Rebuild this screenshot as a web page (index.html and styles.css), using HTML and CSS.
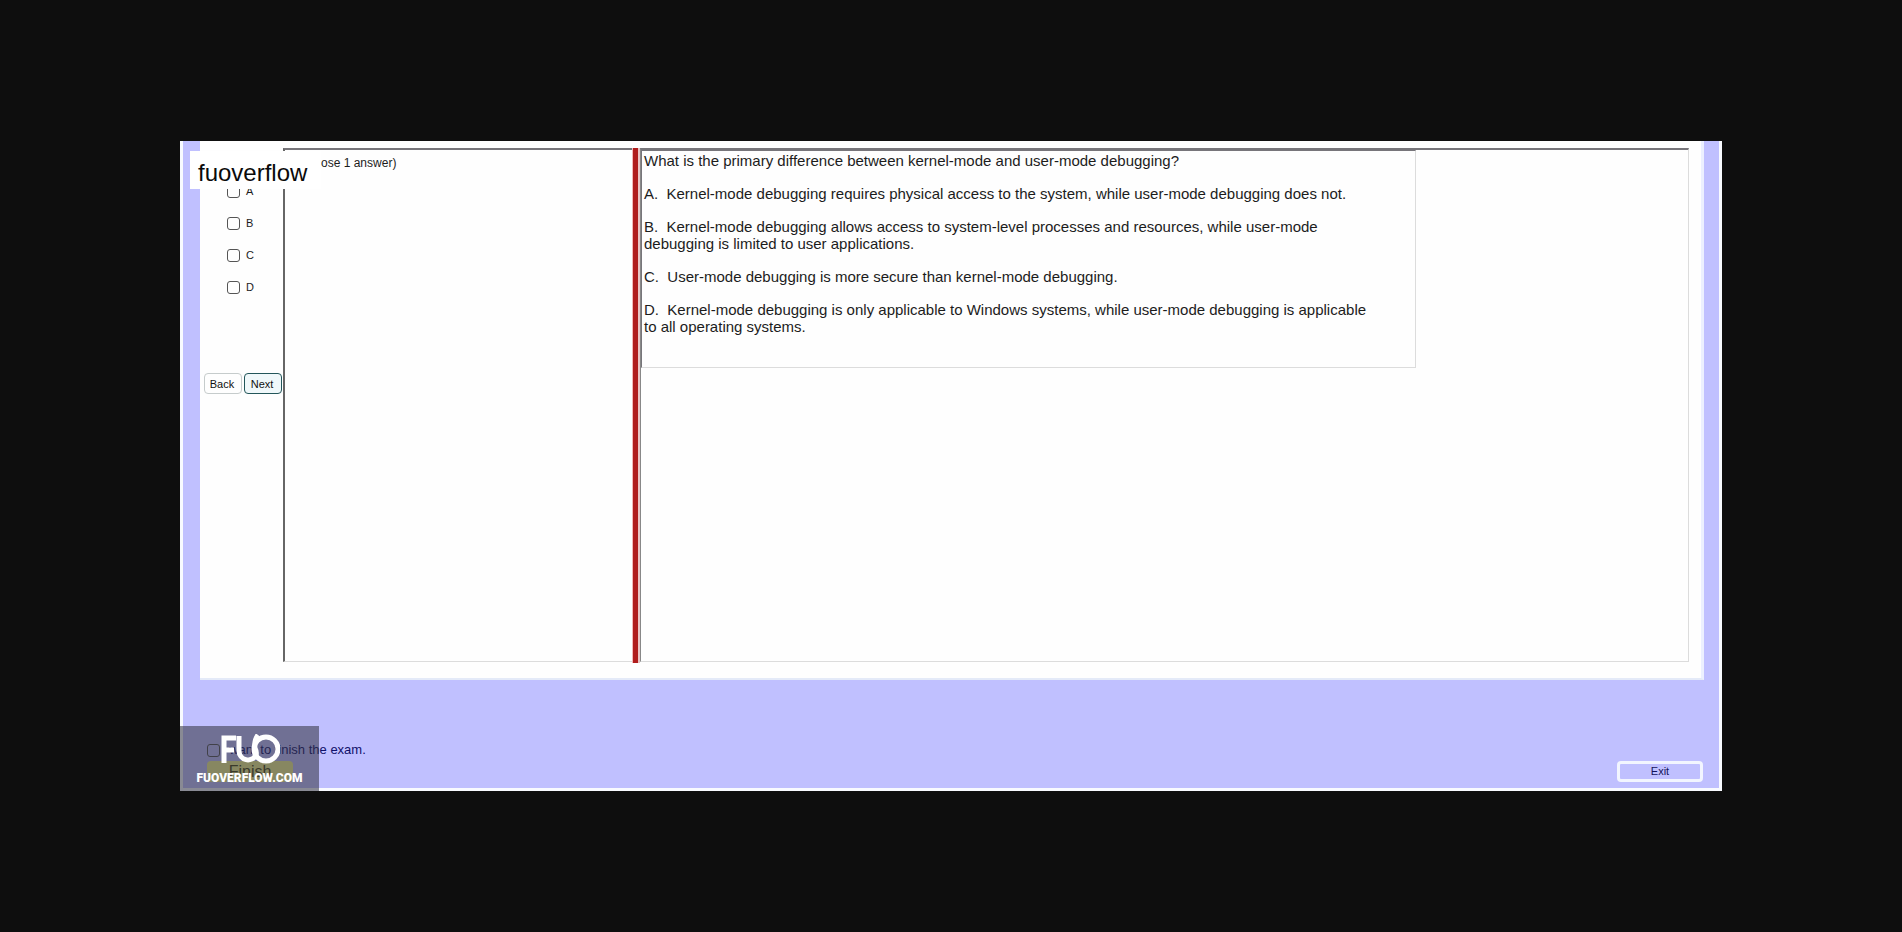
FILE: index.html
```html
<!DOCTYPE html>
<html lang="en">
<head>
<meta charset="utf-8">
<title>Exam</title>
<link rel="stylesheet" href="styles.css">
</head>
<body>
<main class="frame">
  <div class="brand-tag">fuoverflow</div>
  <section class="workspace">
    <div class="answers">
      <div class="choices">
        <label class="choice"><input class="tick" type="checkbox"><span>A</span></label>
        <label class="choice"><input class="tick" type="checkbox"><span>B</span></label>
        <label class="choice"><input class="tick" type="checkbox"><span>C</span></label>
        <label class="choice"><input class="tick" type="checkbox"><span>D</span></label>
      </div>
      <div class="nav">
        <button class="nav-button" type="button">Back</button>
        <button class="nav-button nav-next" type="button">Next</button>
      </div>
    </div>
    <div class="pane hint-pane">(Choose 1 answer)</div>
    <div class="splitter"></div>
    <div class="pane question-pane">
      <article class="question">
        <p>What is the primary difference between kernel-mode and user-mode debugging?</p>
        <p>A.&nbsp; Kernel-mode debugging requires physical access to the system, while user-mode debugging does not.</p>
        <p>B.&nbsp; Kernel-mode debugging allows access to system-level processes and resources, while user-mode debugging is limited to user applications.</p>
        <p>C.&nbsp; User-mode debugging is more secure than kernel-mode debugging.</p>
        <p>D.&nbsp; Kernel-mode debugging is only applicable to Windows systems, while user-mode debugging is applicable to all operating systems.</p>
      </article>
    </div>
  </section>
  <footer class="footer">
    <div class="finish">
      <label class="finish-label"><input class="tick" type="checkbox"><span>I want to finish the exam.</span></label>
      <button class="finish-button" type="button">Finish</button>
    </div>
    <button class="exit-button" type="button">Exit</button>
  </footer>
  <div class="watermark">
    <svg class="logo" viewBox="0 0 60 30" width="60" height="30" aria-hidden="true" fill="none" stroke="#fff" stroke-width="5">
      <path d="M4 29V4H16M4 16H14"/>
      <path d="M19 2V17A9 9 0 0 0 36 21Q37 18 35 14Q34 6 38 1"/>
      <circle cx="46" cy="15" r="12"/>
    </svg>
    <span class="site">FUOVERFLOW.COM</span>
  </div>
</main>
</body>
</html>
```

FILE: styles.css
```css
* { box-sizing: border-box; }
body {
  margin: 0;
  min-height: 100vh;
  padding: 141px 180px;
  display: flex;
  background: #0e0e0e;
  color: #1c1c1c;
  font: 13px/16px "Liberation Sans", Arial, sans-serif;
}
button, input { font: inherit; margin: 0; }
p { margin: 0; }
.frame {
  position: relative;
  flex: 1;
  display: flex;
  flex-direction: column;
  padding: 0 15px 0 17px;
  background: #c0c0ff;
  border: 3px solid #f8faff;
  border-top: 0;
}
.workspace {
  flex: 1;
  display: flex;
  padding: 7px 12px 16px 0;
  background: #fefefe;
  border-right: 3px solid #ecf0ff;
  border-bottom: 2px solid #e4eaf8;
}
.answers { width: 83px; padding: 35px 0 0 4px; }
.choices {
  display: flex;
  flex-direction: column;
  gap: 16px;
  padding-left: 23px;
  font-size: 11px;
}
.choice { display: flex; align-items: center; gap: 6px; }
.tick {
  appearance: none;
  width: 13px;
  height: 13px;
  border: 1px solid #555;
  border-radius: 3px;
}
.nav { display: flex; gap: 2px; padding-top: 78px; }
.nav-button {
  width: 38px;
  height: 21px;
  padding: 0 2px 0 0;
  font-size: 11px;
  color: #111;
  background: #fefefe;
  border: 1px solid #c6cccc;
  border-radius: 4px;
}
.nav-next { background: #f0f8fa; border-color: #23565a; }
.pane {
  border: 1px solid #dcdcdc;
  border-top: 2px solid #77757a;
}
.hint-pane {
  width: 349px;
  padding: 5px 10px;
  font-size: 12px;
  border-left: 2px solid #666;
  border-right: 0;
}
.splitter {
  width: 8px;
  margin-bottom: -1px;
  background: #b01c1c;
  border-left: 1px solid #f3b8b8;
  border-right: 2px solid #e8c4c4;
}
.question-pane { flex: 1; border-left-color: #888; }
.question {
  width: 74%;
  display: flex;
  flex-direction: column;
  gap: 16px;
  padding: 1px 36px 32px 2px;
  font-size: 15px;
  line-height: 17px;
  border: 1px solid #dcdcdc;
  border-top: 1px solid #77757a;
  border-left: 1px solid #77757a;
}
.footer {
  height: 108px;
  display: flex;
  justify-content: space-between;
  align-items: flex-end;
  padding: 0 1px 6px 7px;
}
.finish { display: flex; flex-direction: column; gap: 3px; color: #10106a; }
.finish-label { display: flex; align-items: center; gap: 2px; }
.finish-button {
  width: 86px;
  height: 21px;
  padding: 0;
  font-size: 16px;
  line-height: 20px;
  color: #444410;
  background: #f4f48c;
  border: 0;
  border-radius: 4px;
}
.exit-button {
  width: 86px;
  height: 21px;
  padding: 0;
  font-size: 11px;
  line-height: 15px;
  color: #14145a;
  background: #c0c0ff;
  border: 3px solid #f2f5ff;
  border-radius: 4px;
}
.brand-tag {
  position: absolute;
  left: 7px;
  top: 10px;
  padding: 8px 14px 2px 8px;
  background: #fff;
  color: #0a0a0a;
  font-size: 24px;
  line-height: 28px;
}
.watermark {
  position: absolute;
  left: -3px;
  bottom: -3px;
  width: 139px;
  height: 65px;
  display: flex;
  flex-direction: column;
  align-items: center;
  gap: 5px;
  padding-top: 8px;
  background: rgba(50, 50, 65, 0.56);
  color: #fff;
}
.site { font: 900 12px/18px Roboto, sans-serif; }
```
